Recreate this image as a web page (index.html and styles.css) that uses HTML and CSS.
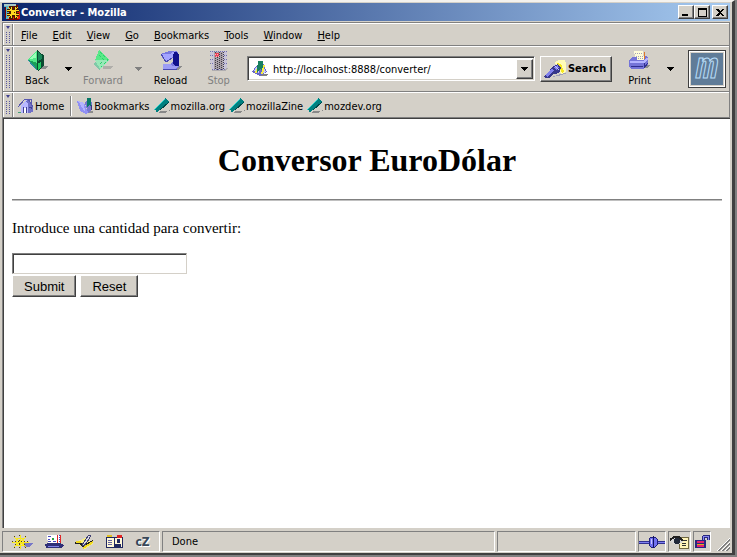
FILE: index.html
```html
<!DOCTYPE html>
<html lang="es">
<head>
  <meta charset="UTF-8">
  <title>Converter - Mozilla</title>
  <link rel="stylesheet" href="styles.css">
</head>
<body>
  <div class="window">
    <header class="titlebar">
      <svg class="icon" width="16" height="16" viewBox="0 0 16 16">
        <path d="M1 1h13v4l2 3v6l-2 2H3l-2-3z" fill="#800000"/>
        <path d="M0 0h5v15H2V3H0z" fill="#5ab4c8"/>
        <path d="M0 0h12v2H0z" fill="#a8c8c8"/>
        <path d="M13 7h3v8H9v-2h4z" fill="#e02010"/>
        <path d="M7 2v13M11 2v13M3 6h12M3 10h12" stroke="#402000" stroke-width="3"/>
        <path d="M7 3v11M11 3v11M3 6h12M3 10h12M4 3l10 11M14 3L4 14" stroke="#ffd820"/>
      </svg>
      <span class="title">Converter - Mozilla</span>
      <button class="win-button" aria-label="Minimize"><svg width="8" height="8"><path d="M0 6h6v2H0z"/></svg></button>
      <button class="win-button" aria-label="Maximize"><svg width="9" height="9"><path d="M0 0h9v9H0zM1 2v6h7V2z" fill-rule="evenodd"/></svg></button>
      <button class="win-button close" aria-label="Close"><svg width="8" height="7"><path d="M0 0h2l2 2 2-2h2L5 3.500 8 7H6L4 5 2 7H0l3-3.500z"/></svg></button>
    </header>

    <div class="toolbox">
      <div class="bar">
        <div class="grippy"></div>
        <nav class="menubar">
          <button><u>F</u>ile</button>
          <button><u>E</u>dit</button>
          <button><u>V</u>iew</button>
          <button><u>G</u>o</button>
          <button><u>B</u>ookmarks</button>
          <button><u>T</u>ools</button>
          <button><u>W</u>indow</button>
          <button><u>H</u>elp</button>
        </nav>
      </div>

      <div class="bar">
        <div class="grippy"></div>
        <div class="toolbar">
          <button class="tool">
            <svg width="22" height="22" viewBox="0 0 22 22">
              <path d="M11 16h11l-3 3h-8z" fill="#8c8c8c"/>
              <path d="M11 0l5 4 2 2v9l-5 6-2-1-9-9z" fill="#0a4a30"/>
              <path d="M11 0v20L2 10z" fill="#18a058"/>
              <path d="M11 0L2 10l9 3z" fill="#50e888"/>
              <path d="M10 2L4 9l6-1z" fill="#98ffb8"/>
              <path d="M12 2l4 4v3l-4 2z" fill="#188858"/>
              <path d="M12 13l3-1v5l-3 3z" fill="#20c860"/>
              <path d="M2 10l9 10" stroke="#2890a0"/>
            </svg>
            Back
          </button>
          <button class="arrow" aria-label="Back history"><svg width="7" height="4"><path d="M0 0h7L4 4H3z"/></svg></button>
          <button class="tool forward" disabled>
            <svg width="22" height="22" viewBox="0 0 22 22">
              <path d="M11 16h11l-4 3h-7z" fill="#b0aeaa"/>
              <path d="M7 0l10 10-9 10-4-3-3-3 4-4z" fill="#80c8a8"/>
              <path d="M7 0l10 10H3z" fill="#58e888"/>
              <path d="M3 10h14l-9 9z" fill="#98e8b8"/>
              <path d="M8 2l8 8-8 8M7 5l5 5-5 5" stroke="#28d068" stroke-dasharray="1 1" fill="none"/>
            </svg>
            Forward
          </button>
          <button class="arrow dim" aria-label="Forward history" disabled><svg width="7" height="4"><path d="M0 0h7L4 4H3z"/></svg></button>
          <button class="tool reload">
            <svg width="22" height="22" viewBox="0 0 22 22">
              <path d="M6 16h16l-3 4H6z" fill="#8c8c8c"/>
              <path d="M1 4l8-3h8l2 4v11l-2 3H3v-5h7l3-2V8L9 6 3 9z" fill="#7878e0"/>
              <path d="M12 2h5l2 3v11h-4l-2-3V7z" fill="#10108c"/>
              <path d="M1 4h9l5-3-3 7-6 4z" fill="#a4a4ff"/>
              <path d="M3 14h7l3 2h5l-2 3H3z" fill="#9c9cf4"/>
              <path d="M1 4l5 8 6-4M3 19h14" stroke="#4848b0" fill="none"/>
            </svg>
            Reload
          </button>
          <button class="tool stop" disabled>
            <svg width="22" height="22" viewBox="0 0 22 22">
              <path d="M4 18h16l-2 3H4z" fill="#b0aeb0"/>
              <path d="M3 1h16v6l-1 2 1 2v7l-3 2H5l-2-3 1-3-2-3 2-3-2-3z" fill="#c8c4d8"/>
              <path d="M2 1h18M2 5h4M2 9h4M2 13h4M16 5h4M16 9h4M16 13h4M4 19h14" stroke="#7070b0" stroke-dasharray="1 1"/>
              <path d="M6 2h9v17H6z" fill="#a8a0a8"/>
              <path d="M7 2v17M9 3v17M11 2v17M13 3v17M15 2v17" stroke="#403c48" stroke-dasharray="1 1"/>
              <path d="M7 3h4v4H7z" fill="#e84058"/>
              <path d="M7 4h4M8 6h3" stroke="#ffb0b8" stroke-dasharray="1 1"/>
            </svg>
            Stop
          </button>
          <div class="urlbar">
            <svg class="icon" width="16" height="16" viewBox="0 0 16 16">
              <path d="M5 13h11l-2 2H8z" fill="#808080"/>
              <path d="M0 11l5-7 6-2 4 9-7 4z" fill="#6868c8"/>
              <path d="M2 10l3-5 2 7zM11 4l3 7-3 1z" fill="#c8c8ff"/>
              <path d="M4 12l3-8M10 13l2-9" stroke="#f8f040" stroke-width="2"/>
              <path d="M6 0h5v5l-1 5-2-2-3 4V8z" fill="#188060"/>
            </svg>
            <input type="text" value="http://localhost:8888/converter/" aria-label="Location">
            <button class="drop" aria-label="Show history"><svg width="7" height="4"><path d="M0 0h7L4 4H3z"/></svg></button>
          </div>
          <button class="search">
            <svg class="icon" width="23" height="18" viewBox="0 0 23 18">
              <path d="M7 17l12-4h4l-8 3z" fill="#a0a0b8"/>
              <path d="M11 2l4-2h6l1 4v8l-4 2-5-4z" fill="#fffcb8"/>
              <path d="M13 3l4 1 3 7-2 2z" fill="#f8e820"/>
              <path d="M0 16l6-6 2-3 6-3 3 4-2 5-5 1-5 4H1z" fill="#38388c"/>
              <path d="M1 15l7-6 2 2-7 6zM10 7l4-2 1 3-3 2z" fill="#8080ec"/>
              <path d="M10 5l5 5" stroke="#c0c0ff"/>
            </svg>
            Search
          </button>
          <button class="tool print">
            <svg width="22" height="22" viewBox="0 0 22 22">
              <path d="M13 15h9l-4 3h-6z" fill="#8c8c8c"/>
              <path d="M5 1h9v3l2 7H7z" fill="#fffcd8"/>
              <path d="M6 3h7M7 6h7M7 8h8" stroke="#a0a0b8" stroke-dasharray="1 1"/>
              <path d="M0 10l4-3h4v3h7V5l4 2v7l-4 5H2l-2-3z" fill="#7474d8"/>
              <path d="M1 11h13l4-3 1 1-4 4H1z" fill="#b4b4ff"/>
              <path d="M2 16h12M15 13v5l4-5" stroke="#303090" fill="none"/>
              <path d="M15 2v7" stroke="#e07828"/>
            </svg>
            Print
          </button>
          <button class="arrow" aria-label="Print options"><svg width="7" height="4"><path d="M0 0h7L4 4H3z"/></svg></button>
          <div class="throbber"><span>m</span></div>
        </div>
      </div>

      <div class="bar">
        <div class="grippy"></div>
        <nav class="links">
          <a href="#" class="home">
            <svg class="icon" width="16" height="16" viewBox="0 0 16 16">
              <path d="M0 14h6v1H0z" fill="#40a078"/>
              <path d="M3 8l5-6 4 4v9H3z" fill="#b8b8ff"/>
              <path d="M8 3l3-2 4 7v6l-5 1V6z" fill="#7070c8"/>
              <path d="M0 9l7-8h3l5 8M11 1h2v5" fill="none" stroke="#5858b0"/>
              <path d="M5 10h3v5H5z" fill="#fff"/>
              <path d="M5 9v6M8 9v6M11 9h2v2" stroke="#404090"/>
            </svg>Home</a>
          <a href="#">
            <svg class="icon" width="16" height="16" viewBox="0 0 16 16">
              <path d="M8 13h8v2H9z" fill="#8c8c8c"/>
              <path d="M8 5l3-4 4 3v8l-4 3z" fill="#7878d0"/>
              <path d="M10 0h4v9l-2-2-2 3z" fill="#087868"/>
              <path d="M0 3l7 2 4 9-2 2-6-3z" fill="#9090f4"/>
              <path d="M1 3l6 2 1 9z" fill="#b4b4ff"/>
              <path d="M14 7v5" stroke="#383878"/>
            </svg>Bookmarks</a>
          <a href="#"><svg class="icon" width="16" height="16" viewBox="0 0 16 16"><path d="M6 13h9l1-1-5 3H5z" fill="#888"/><path d="M0 12L11 0l4 4-9 7-3 4-1-3z" fill="#008080"/><path d="M0 12L11 1" stroke="#30d8d0"/><path d="M15 4l-9 8" stroke="#004848"/></svg>mozilla.org</a>
          <a href="#"><svg class="icon" width="16" height="16" viewBox="0 0 16 16"><path d="M6 13h9l1-1-5 3H5z" fill="#888"/><path d="M0 12L11 0l4 4-9 7-3 4-1-3z" fill="#008080"/><path d="M0 12L11 1" stroke="#30d8d0"/><path d="M15 4l-9 8" stroke="#004848"/></svg>mozillaZine</a>
          <a href="#"><svg class="icon" width="16" height="16" viewBox="0 0 16 16"><path d="M6 13h9l1-1-5 3H5z" fill="#888"/><path d="M0 12L11 0l4 4-9 7-3 4-1-3z" fill="#008080"/><path d="M0 12L11 1" stroke="#30d8d0"/><path d="M15 4l-9 8" stroke="#004848"/></svg>mozdev.org</a>
        </nav>
      </div>
    </div>

    <main class="page">
      <h1>Conversor EuroDólar</h1>
      <hr>
      <form>
        <label for="amount">Introduce una cantidad para convertir:</label>
        <input type="text" id="amount">
        <div class="buttons">
          <button type="submit">Submit</button>
          <button type="reset">Reset</button>
        </div>
      </form>
    </main>

    <footer class="statusbar">
      <div class="panel components">
        <button aria-label="Navigator"><svg width="22" height="14" viewBox="0 0 22 14"><path d="M12 8h9l-4 4h-5z" fill="#7878c8"/><g fill="none"><path d="M8 0v14M2 2l12 10M14 2L2 12M0 7h17" stroke="#504010" stroke-width="2" stroke-dasharray="1 2"/><path d="M8 0v14M2 2l12 10M14 2L2 12M0 7h17" stroke="#f8e820"/><circle cx="8" cy="7" r="4" stroke="#f8e820"/></g></svg></button>
        <button aria-label="Mail"><svg width="19" height="14" viewBox="0 0 19 14"><path d="M2 0h14v9H3z" fill="#fff"/><path d="M0 9l3-1h12l4 2-2 3H1z" fill="#303078"/><path d="M3 1h3M3 4h2M3 6h3M8 6h3" stroke="#4848c0"/><path d="M7 3h2v2H7z" fill="#30a040"/><path d="M12 0v8M15 0v8" stroke="#e02828"/><path d="M14 0v8" stroke="#4848c0" stroke-dasharray="1 1"/><path d="M3 11h11" stroke="#8080e8"/></svg></button>
        <button aria-label="Composer"><svg width="20" height="14" viewBox="0 0 20 14"><path d="M1 7l9-4 9 5-9 6z" fill="#f8f080"/><path d="M0 8h5l3 3 10-5" stroke="#202020" stroke-width="2" fill="none"/><path d="M7 10l6-9 3-1-2 4-5 7z" fill="#d8d8e8" stroke="#404070"/><path d="M8 13l10-6M1 7h5" stroke="#f0d820" stroke-width="2"/></svg></button>
        <button aria-label="Address book"><svg width="18" height="14" viewBox="0 0 18 14"><path d="M0 2h17v11H0z" fill="#202860"/><path d="M1 3h7v9H1zM9 3h7v9H9z" fill="#fff8d8"/><path d="M1 0h5v2H1z" fill="#e0c020"/><path d="M11 0h5v3h-5z" fill="#e02020"/><path d="M2 5h4M2 7h4M2 9h4" stroke="#6060a0"/><path d="M11 4h3v4h-3zM9 9h6v3H9z" fill="#202860"/></svg></button>
        <button class="chat">cZ</button>
      </div>
      <div class="panel status">Done</div>
      <div class="panel progress"></div>
      <div class="panel online"><svg width="26" height="14" viewBox="0 0 26 14"><path d="M0 7h26" stroke="#303090" stroke-width="3"/><path d="M0 7h26" stroke="#8080f0"/><path d="M10 4l2-2h4l2 2v6l-2 2h-4l-2-2z" fill="#7070f0" stroke="#202080"/><path d="M14 1v12" stroke="#101060"/><path d="M12 4v5" stroke="#c8c8ff"/></svg></div>
      <div class="panel cookies"><svg width="19" height="14" viewBox="0 0 19 14"><path d="M9 2h9v11H9z" fill="#fff4b8" stroke="#706840"/><path d="M13 5h4M12 8h4M12 10h4" stroke="#303030"/><path d="M0 6l4-4h6l3 5-4 2H4z" fill="#d8d8d8"/><path d="M0 5l4-3h5l4 4" stroke="#202020" stroke-width="2" fill="none"/><circle cx="7" cy="6" r="3" fill="#202838"/></svg></div>
      <div class="panel security"><svg width="16" height="14" viewBox="0 0 16 14"><path d="M9 6V2l2-1h3v4" stroke="#282880" stroke-width="3" fill="none"/><path d="M9 6V2l2-1h3v4" stroke="#8888f0" fill="none"/><path d="M1 5h11v8H1z" fill="#282880"/><path d="M3 7h7M3 11h7" stroke="#e82070" stroke-width="2"/><path d="M3 9h7" stroke="#d8b020"/></svg></div>
      <svg class="resizer" width="13" height="13" viewBox="0 0 13 13"><path d="M0 13L13 0M4 13l9-9M8 13l5-5" stroke="#fff"/><path d="M1 13L13 1M2 13L13 2M5 13l8-8M6 13l7-7M9 13l4-4M10 13l3-3" stroke="#808080"/></svg>
    </footer>
  </div>
</body>
</html>
```
FILE: styles.css
```css
* {
  box-sizing: border-box;
}
body {
  margin: 0;
  background-color: #808080;
  font-family: "DejaVu Sans Condensed", "DejaVu Sans", Tahoma, sans-serif;
  font-size: 11px;
  color: #000;
}
svg {
  display: block;
  flex: none;
  shape-rendering: crispEdges;
}
button, input {
  font: inherit;
  color: inherit;
  margin: 0;
  padding: 0;
  border: none;
  background: none;
  border-radius: 0;
}
.window {
  display: flex;
  flex-direction: column;
  min-height: calc(100vh - 2px);
  margin-right: 2px;
  padding: 1px 2px 1px 2px;
  background-color: #d4d0c8;
  border-top: 2px solid #f4f2ee;
  border-right: 3px solid #404040;
  border-bottom: 2px solid #404040;
}

/* title bar */
.titlebar {
  display: flex;
  align-items: center;
  height: 18px;
  padding: 0 2px;
  background: linear-gradient(to right, #0a246a, #a6caf0);
}
.title {
  flex: 1;
  margin-left: 1px;
  color: #fff;
  font-weight: bold;
}
.win-button {
  display: flex;
  align-items: center;
  justify-content: center;
  width: 16px;
  height: 14px;
  background-color: #d4d0c8;
  border: 1px solid;
  border-color: #fff #404040 #404040 #fff;
  box-shadow: inset -1px -1px #808080;
}
.close {
  margin-left: 2px;
}

/* toolbars */
.toolbox {
  margin-top: 1px;
  border-left: 1px solid #808080;
  border-right: 1px solid #808080;
}
.bar {
  display: flex;
  border-top: 1px solid #808080;
  box-shadow: inset 0 1px #fff;
}
.grippy {
  display: flex;
  flex-direction: column;
  gap: 2px;
  width: 10px;
  margin-top: 1px;
  padding: 2px;
  border-left: 1px solid #fff;
  border-right: 1px solid #808080;
  box-shadow: 1px 0 #fff;
}
.grippy::before {
  content: "";
  height: 3px;
  background-color: #404090;
  clip-path: polygon(0 0, 100% 0, 50% 100%);
}
.grippy::after {
  content: "";
  flex: 1;
  background:
    repeating-linear-gradient(#d4d0c8 0 1px, transparent 1px 2px),
    repeating-linear-gradient(to right, #5858a0 0 1px, transparent 1px 3px);
}
.menubar {
  display: flex;
  align-items: center;
  gap: 15px;
  height: 22px;
  padding: 3px 8px 0;
}
.toolbar {
  display: flex;
  flex: 1;
  align-items: center;
  height: 45px;
  padding: 0 3px 0 12px;
}
.tool {
  display: flex;
  flex-direction: column;
  align-items: center;
  gap: 2px;
}
.tool:disabled {
  color: #808080;
}
.arrow {
  margin-left: 16px;
}
.dim {
  margin-left: 12px;
  fill: #808080;
}
.forward {
  margin-left: 11px;
}
.reload {
  margin-left: 12px;
}
.stop {
  margin-left: 20px;
}
.urlbar {
  display: flex;
  flex: 1;
  align-items: center;
  height: 25px;
  margin-left: 17px;
  padding: 1px 1px 1px 4px;
  background-color: #fff;
  border: 1px solid;
  border-color: #808080 #fff #fff #808080;
  box-shadow: inset 1px 1px #404040, inset -1px -1px #d4d0c8;
}
.urlbar input {
  flex: 1;
  min-width: 0;
  margin-left: 5px;
  padding-top: 2px;
  outline: none;
}
.drop {
  display: flex;
  align-items: center;
  justify-content: center;
  width: 17px;
  height: 20px;
  background-color: #d4d0c8;
  border: 1px solid;
  border-color: #fff #404040 #404040 #fff;
  box-shadow: inset -1px -1px #808080;
}
.search {
  display: flex;
  align-items: center;
  gap: 1px;
  height: 26px;
  margin-left: 5px;
  padding: 0 5px 0 3px;
  font-weight: bold;
  border: 1px solid;
  border-color: #fff #404040 #404040 #fff;
  box-shadow: inset -1px -1px #808080;
}
.print {
  margin-left: 16px;
}
.throbber {
  display: flex;
  justify-content: center;
  width: 38px;
  height: 38px;
  margin-left: 14px;
  background-color: #607c98;
  border: 1px solid #404040;
  box-shadow: inset 0 0 0 1px #fff, inset 0 0 0 2px #d4d0c8;
}
.throbber span {
  font: italic bold 36px/36px "Liberation Mono", monospace;
  color: #607c98;
  -webkit-text-stroke: 1px #b8dcf8;
}
.links {
  display: flex;
  align-items: center;
  gap: 4px;
  height: 25px;
  padding: 3px 5px 0;
}
.links a {
  display: flex;
  align-items: center;
  gap: 1px;
  color: inherit;
  text-decoration: none;
}
.links .home {
  height: 20px;
  margin-right: 2px;
  padding-right: 6px;
  border-right: 1px solid #808080;
  box-shadow: 1px 0 #fff;
}

/* document */
.page {
  flex: 1;
  padding: 9px 8px 9px 9px;
  background-color: #fff;
  border-left: 1px solid #808080;
  border-top: 1px solid #808080;
  box-shadow: inset 1px 1px #404040;
  font: 15px "Liberation Serif", "Times New Roman", serif;
}
h1 {
  margin: 15px 0 20px;
  font-size: 32px;
  line-height: 37px;
  text-align: center;
}
hr {
  height: 2px;
  margin: 0 0 18px;
  border: none;
  border-top: 1px solid #808080;
  border-bottom: 1px solid #c0c0c0;
}
form label {
  display: block;
  margin-bottom: 16px;
  line-height: 18px;
}
form input {
  display: block;
  width: 175px;
  height: 21px;
  border: 1px solid;
  border-color: #808080 #d4d0c8 #d4d0c8 #808080;
  box-shadow: inset 1px 1px #404040;
}
.buttons {
  display: flex;
  gap: 4px;
  margin-top: 1px;
}
form button {
  height: 22px;
  padding: 0 11px;
  font: 13px "Liberation Sans", Arial, sans-serif;
  background-color: #d4d0c8;
  border: 1px solid;
  border-color: #fff #404040 #404040 #fff;
  box-shadow: inset -1px -1px #808080;
}

/* status bar */
.statusbar {
  display: flex;
  gap: 2px;
  height: 24px;
  padding-top: 3px;
}
.panel {
  display: flex;
  align-items: center;
  justify-content: center;
  border: 1px solid;
  border-color: #808080 #fff #fff #808080;
}
.components {
  width: 158px;
  gap: 11px;
}
.chat {
  font-size: 12px;
  font-weight: bold;
  color: #384858;
  text-shadow: 1px 1px #fff;
}
.status {
  flex: 1;
  justify-content: flex-start;
  padding-left: 9px;
}
.progress {
  width: 139px;
}
.online {
  width: 28px;
}
.cookies {
  width: 23px;
}
.security {
  width: 18px;
}
.resizer {
  align-self: flex-end;
  margin: 0 0 1px 4px;
}
```
